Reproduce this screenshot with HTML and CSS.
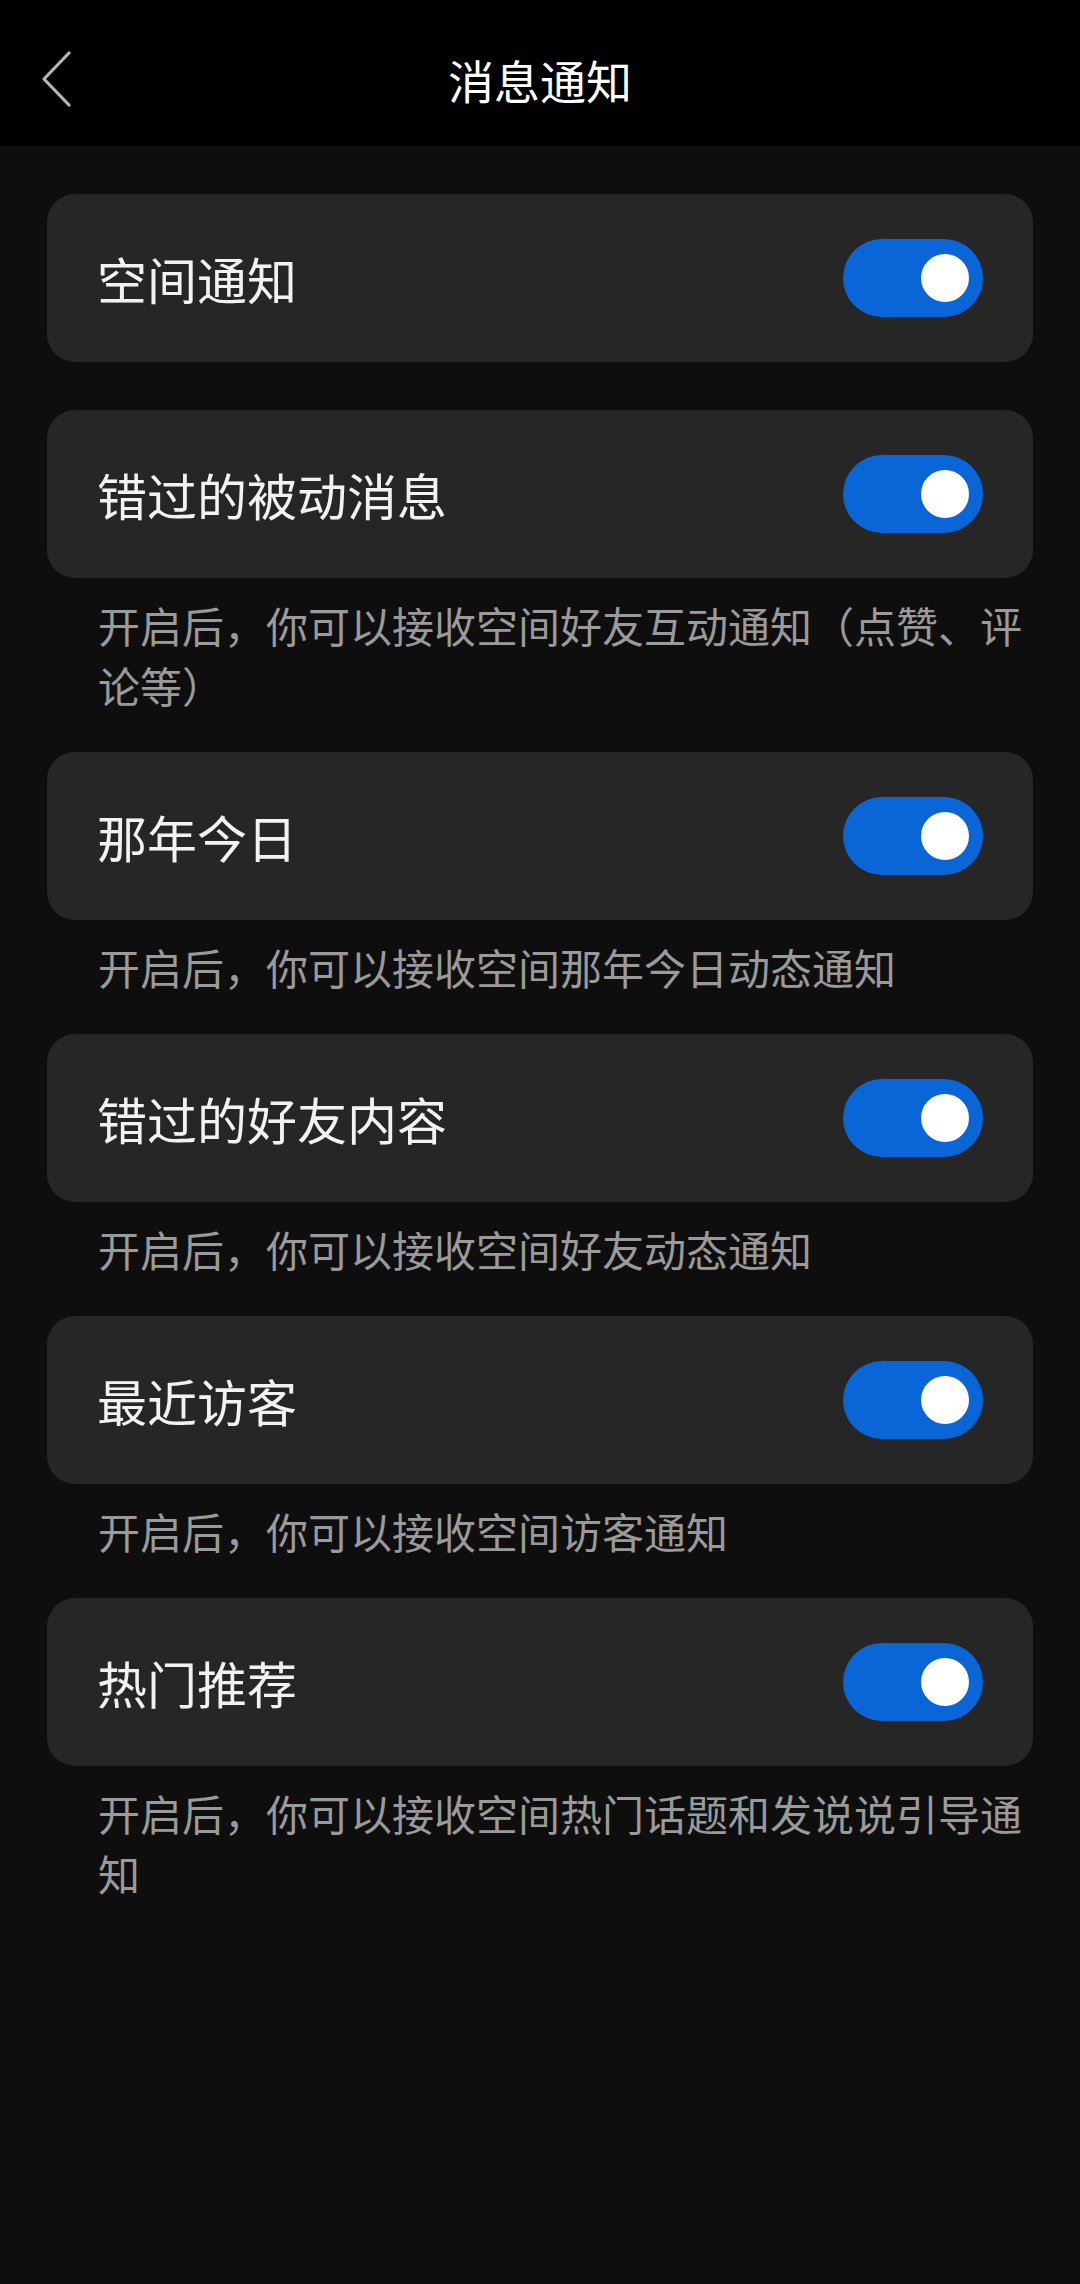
FILE: index.html
```html
<!DOCTYPE html>
<html lang="zh-CN">
<head>
<meta charset="utf-8">
<title>消息通知</title>
<link rel="stylesheet" href="styles.css">
</head>
<body>
<header class="topbar">
  <svg class="back" width="30" height="56" viewBox="0 0 30 56"><polyline points="27,2 2,28 27,54" fill="none" stroke="#b5b5b5" stroke-width="3.2" stroke-linecap="round" stroke-linejoin="round"/></svg>
  <h1 class="title">消息通知</h1>
</header>
<main class="list">
  <section class="group">
    <div class="card"><span class="label">空间通知</span><span class="toggle"><span class="knob"></span></span></div>
  </section>
  <section class="group">
    <div class="card"><span class="label">错过的被动消息</span><span class="toggle"><span class="knob"></span></span></div>
    <p class="desc">开启后，你可以接收空间好友互动通知（点赞、评论等）</p>
  </section>
  <section class="group">
    <div class="card"><span class="label">那年今日</span><span class="toggle"><span class="knob"></span></span></div>
    <p class="desc">开启后，你可以接收空间那年今日动态通知</p>
  </section>
  <section class="group">
    <div class="card"><span class="label">错过的好友内容</span><span class="toggle"><span class="knob"></span></span></div>
    <p class="desc">开启后，你可以接收空间好友动态通知</p>
  </section>
  <section class="group">
    <div class="card"><span class="label">最近访客</span><span class="toggle"><span class="knob"></span></span></div>
    <p class="desc">开启后，你可以接收空间访客通知</p>
  </section>
  <section class="group">
    <div class="card"><span class="label">热门推荐</span><span class="toggle"><span class="knob"></span></span></div>
    <p class="desc">开启后，你可以接收空间热门话题和发说说引导通知</p>
  </section>
</main>
</body>
</html>
```
FILE: styles.css
```css
* { box-sizing: border-box; }
html, body {
  margin: 0;
  padding: 0;
  background: #0e0e0e;
  font-family: "Noto Sans CJK SC", "Noto Sans", sans-serif;
  height: 2284px;
}
.topbar {
  position: relative;
  height: 146px;
  background: #000;
  display: flex;
  align-items: center;
  justify-content: center;
  padding-top: 12px;
}
.back {
  position: absolute;
  left: 42px;
  top: 51px;
}
.title {
  margin: 0;
  font-size: 46px;
  font-weight: 400;
  color: #fff;
  line-height: 1;
}
.list {
  padding: 48px 47px 0;
  display: flex;
  flex-direction: column;
}
.group { margin: 0; }
.group:first-child { margin-bottom: 48px; }
.card {
  height: 168px;
  background: #262626;
  border-radius: 28px;
  display: flex;
  align-items: center;
  justify-content: space-between;
  padding: 0 50px 0 50px;
}
.label {
  font-size: 50px;
  color: #f2f2f2;
  line-height: 1;
}
.toggle {
  width: 140px;
  height: 78px;
  border-radius: 39px;
  background: #0a66d6;
  display: flex;
  align-items: center;
  justify-content: flex-end;
  padding-right: 14px;
}
.knob {
  width: 48px;
  height: 48px;
  border-radius: 50%;
  background: #fff;
}
.desc {
  margin: 0;
  padding: 17px 0 37px 51px;
  font-size: 42px;
  line-height: 60px;
  color: #9a9a9a;
}
```
